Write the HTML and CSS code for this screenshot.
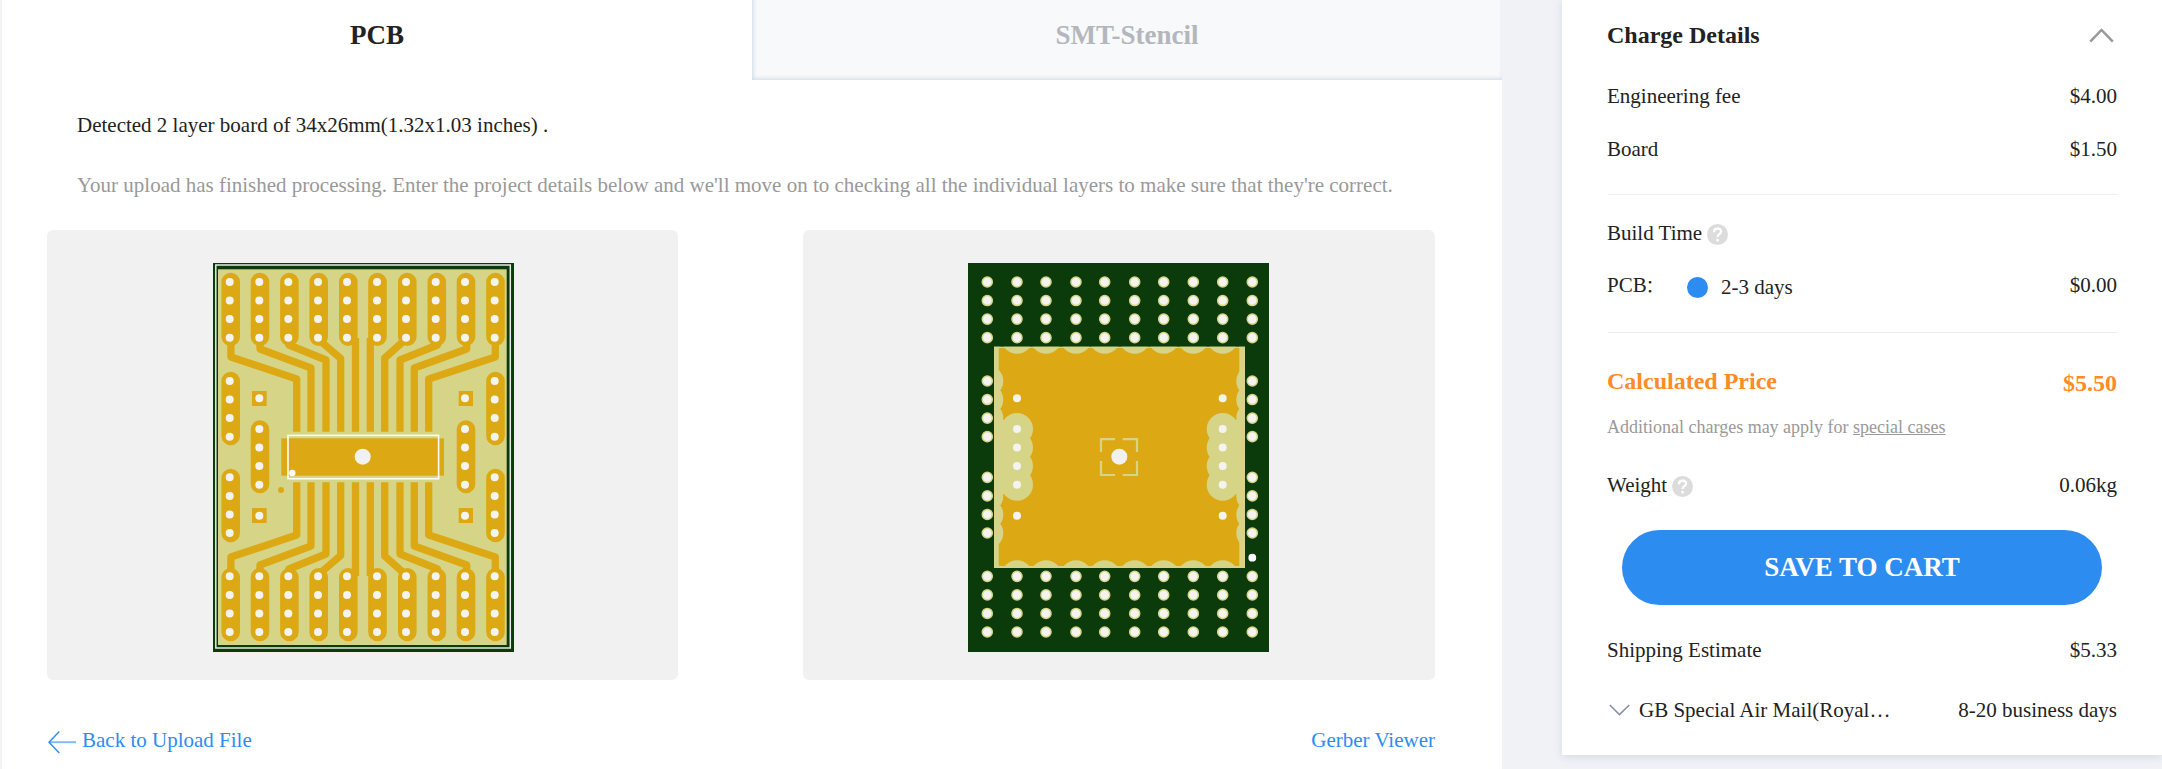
FILE: index.html
```html
<!DOCTYPE html>
<html lang="en">
<head>
<meta charset="utf-8">
<title>PCB Order</title>
<link rel="stylesheet" href="styles.css">
</head>
<body>
<div class="page">
  <main class="panel">
    <nav class="tabs">
      <div class="tab tab-active">PCB</div>
      <div class="tab tab-idle">SMT-Stencil</div>
    </nav>
    <p class="detected"><span>Detected 2 layer board of 34x26mm(1.32x1.03 inches) .</span></p>
    <p class="notice"><span>Your upload has finished processing. Enter the project details below and we'll move on to checking all the individual layers to make sure that they're correct.</span></p>
    <div class="boards">
      <div class="board-box board-front">
        <svg width="301" height="389" viewBox="0 0 301 389">
          <rect class="green" width="301" height="389"/>
          <rect class="edge" x="2.8" y="2" width="294.5" height="383"/>
          <rect class="pale" x="5" y="6.3" width="288.7" height="375.7"/>
          <defs>
            <g id="front-half">
              <g class="pad">
                <path d="M17.7 19V73.7M47 19V73.7M76.4 19V73.7M105.7 19V73.7M135.3 19V73.7M164.5 19V73.7M194.3 19V73.7M223.8 19V73.7M253 19V73.7M282.5 19V73.7M17.7 118V173M282.5 118V173"/>
              </g>
              <g class="trace">
                <path d="M17.9 75V94L83.7 116V168.7M47 75V86L98 105V168.7M75 80L76 82L113 97V168.7M105 76L127.7 95.5V168.7M142.5 75V168.7"/>
                <path d="M157.3 75V168.7M193 76L171.7 95V168.7M225.5 78L224.5 82L187 97V168.7M253.7 75V86L201.3 105V168.7M282.3 75V94L215.7 116V168.7"/>
              </g>
              <path class="gold" d="M39 128h14.7v15H39zM245.7 128h14.3v15h-14.3z"/>
              <path class="drill" d="M16.7 19V75M46.3 19V75M75.3 19V75M105 19V75M134 19V75M164 19V75M193 19V75M222.7 19V75M252 19V75M281.7 19V75M16.7 118V174M281.7 118V174M46.3 135.3h.1M252 135.3h.1"/>
            </g>
          </defs>
          <use href="#front-half"/>
          <use href="#front-half" transform="matrix(1 0 0 -1 0 388)"/>
          <path class="pad" d="M47 166.5V221M253 166.5V221"/>
          <path class="drill" d="M46.3 166V222M252 166V222"/>
          <rect class="gold" x="68.3" y="175.3" width="162.7" height="37.4"/>
          <rect class="silk" x="75" y="172.4" width="150.6" height="43.3"/>
          <circle class="hole" cx="149.7" cy="193.7" r="8"/>
          <circle class="white" cx="79.3" cy="210" r="3.2"/>
          <circle class="gold" cx="68" cy="227" r="3"/>
        </svg>
      </div>
      <div class="board-box board-back">
        <svg width="301" height="389" viewBox="0 0 301 389">
          <rect class="green" width="301" height="389"/>
          <rect class="pale" x="26" y="83.7" width="251" height="221.3"/>
          <rect class="gold" x="30.7" y="85" width="240.6" height="218"/>
          <defs>
            <clipPath id="pour"><rect x="26" y="83.7" width="251" height="221.3"/></clipPath>
            <g id="back-half">
              <path d="M19.3 19V75M49 19V75M78 19V75M108 19V75M136.7 19V75M166.7 19V75M195.7 19V75M225.3 19V75M254.7 19V75M284.3 19V75M19.3 118V174M284.3 118V174"/>
            </g>
          </defs>
          <g clip-path="url(#pour)">
            <g class="clearance">
              <use href="#back-half"/>
              <use href="#back-half" transform="matrix(1 0 0 -1 0 388)"/>
              <path d="M49 166V222M254.7 166V222"/>
            </g>
            <path class="pale" d="M28 157h9v74h-9zM266 157h9v74h-9zM34 166h15v56H34zM254.7 166h15v56h-15z"/>
          </g>
          <g class="ring">
            <use href="#back-half"/>
            <use href="#back-half" transform="matrix(1 0 0 -1 0 388)"/>
          </g>
          <g class="drill drill-back">
            <use href="#back-half"/>
            <use href="#back-half" transform="matrix(1 0 0 -1 0 388)"/>
          </g>
          <path class="drill" d="M49 166V222M254.7 166V222M49 135.3h.1M254.7 135.3h.1M49 252.7h.1M254.7 252.7h.1"/>
          <path class="bracket" d="M133 189V176.2H147M154.7 176.2H169V189M169 198V212H154.7M147 212H133V198"/>
          <circle class="hole" cx="151.3" cy="193.7" r="8"/>
          <circle class="white" cx="284.3" cy="294.7" r="3.9"/>
        </svg>
      </div>
    </div>
    <div class="links">
      <a class="link back"><svg width="28" height="24" viewBox="0 0 28 24"><path class="shaft" d="M1 12.2H28"/><path class="head" d="M11.3 1.4L1 12.2L11.3 23"/></svg><span>Back to Upload File</span></a>
      <a class="link gerber">Gerber Viewer</a>
    </div>
  </main>
  <aside class="card">
    <div class="row row-title"><h2>Charge Details</h2>
      <svg class="chev-up" width="25" height="15" viewBox="0 0 25 15"><path d="M1.2 13.7L12.5 2L23.8 13.7"/></svg></div>
    <div class="row"><span>Engineering fee</span><span>$4.00</span></div>
    <div class="row row-board"><span>Board</span><span>$1.50</span></div>
    <hr class="rule">
    <div class="row row-build"><span>Build Time</span>
      <svg class="help" width="21" height="21" viewBox="0 0 21 21"><circle cx="10.5" cy="10.5" r="10.5"/><path d="M6.9 8.2C6.9 3.3 14.1 3.5 14.1 7.6C14.1 10.1 10.5 10.1 10.5 13"/><rect x="9.2" y="14.7" width="2.7" height="2.7" rx="1"/></svg></div>
    <div class="row row-pcb"><span class="pcb-label">PCB<span class="colon">：</span></span><span class="option"><i class="radio"></i>2-3 days</span><span class="push">$0.00</span></div>
    <hr class="rule rule-second">
    <div class="row row-price"><span>Calculated Price</span><span class="total">$5.50</span></div>
    <div class="row row-note"><span>Additional charges may apply for <u>special cases</u></span></div>
    <div class="row row-weight"><span>Weight</span>
      <svg class="help" width="21" height="21" viewBox="0 0 21 21"><circle cx="10.5" cy="10.5" r="10.5"/><path d="M6.9 8.2C6.9 3.3 14.1 3.5 14.1 7.6C14.1 10.1 10.5 10.1 10.5 13"/><rect x="9.2" y="14.7" width="2.7" height="2.7" rx="1"/></svg><span class="push">0.06kg</span></div>
    <button class="save">SAVE TO CART</button>
    <div class="row"><span>Shipping Estimate</span><span>$5.33</span></div>
    <div class="row row-mail"><svg class="chev-down" width="21" height="12" viewBox="0 0 21 12"><path d="M.8 1L10.5 10.6L20.2 1"/></svg><span class="mail">GB Special Air Mail(Royal…</span><span class="push">8-20 business days</span></div>
  </aside>
</div>
</body>
</html>
```
FILE: styles.css
```css
* { box-sizing: border-box; }
body {
  margin: 0;
  background: #f0f2f6;
  color: #222;
  font: 21px/30px "Liberation Serif", "Noto Sans CJK SC", serif;
}
.page { display: flex; height: 769px; overflow: hidden; padding-left: 2px; }
p, h2 { margin: 0; }

.panel { width: 1500px; background: #fff; }
.tabs { display: flex; height: 80px; font-size: 27px; font-weight: bold; }
.tab { flex: 1; text-align: center; line-height: 71px; }
.tab-idle {
  margin-top: -10px; padding-top: 10px;
  color: #b3b7bd; background: #f8f9fb; box-shadow: inset 1px -1px 4px 0 #c9d8e4;
}
.detected { padding: 30px 0 0 75px; }
.notice { padding: 30px 0 0 75px; color: #999; white-space: nowrap; }
.boards { display: flex; justify-content: space-between; padding: 30px 67px 0 45px; }
.board-box {
  display: flex; align-items: center; justify-content: center;
  width: 632px; height: 450px; border-radius: 6px; background: #f1f1f1;
}
.board-front { width: 631px; padding-left: 2px; }
.board-back { padding-right: 1px; }
.board-box svg { margin-top: 5px; }
.green { fill: #0b3a0b; }
.pale { fill: #d6d486; }
.gold { fill: #dca914; }
.hole { fill: #f1f1f1; }
.white { fill: #fff; }
.edge { fill: none; stroke: #e8ebe6; stroke-width: 1.5; }
.silk { fill: none; stroke: #fffff4; stroke-width: 1.6; }
.pad { fill: none; stroke: #dca914; stroke-width: 18.6; stroke-linecap: round; }
.trace { fill: none; stroke: #dca914; stroke-width: 7.3; stroke-linejoin: round; }
.drill { fill: none; stroke: #f3f3f1; stroke-width: 8; stroke-linecap: round; stroke-dasharray: 0 18.55; }
.drill-back { stroke-width: 8.6; }
.ring { fill: none; stroke: #d6d486; stroke-width: 11.6; stroke-linecap: round; stroke-dasharray: 0 18.55; }
.clearance { fill: none; stroke: #d6d486; stroke-width: 32; stroke-linecap: round; stroke-dasharray: 0 18.55; }
.bracket { fill: none; stroke: #d6d486; stroke-width: 2.2; }

.links { display: flex; justify-content: space-between; padding: 45px 67px 0 46px; }
.link { display: flex; align-items: center; color: #2d8cf0; }
.back { gap: 6px; }
.back svg { margin-top: 3px; }
.back path { fill: none; stroke: #2d8cf0; stroke-width: 1.4; }
.back .shaft { stroke: #81baf6; stroke-width: 2; }

.card {
  width: 600px; height: 755px; margin-left: 60px; padding: 0 45px;
  background: #fff; box-shadow: 0 2px 8px rgba(150, 165, 190, .3);
}
.row { display: flex; align-items: center; justify-content: space-between; height: 52px; white-space: nowrap; }
.push { margin-left: auto; }
.row-title { height: 70px; }
.row-title h2 { font-size: 24px; }
.chev-up { margin-right: 3px; fill: none; stroke: #999; stroke-width: 2.5; }
.row-board { height: 54px; }
.rule { height: 1px; margin: 18px 0 12px 1px; border: 0; background: #eee; }
.row-build, .row-weight { justify-content: flex-start; }
.help { margin: 3px 0 0 5px; }
.help circle { fill: #dcdcdc; }
.help rect { fill: #fff; }
.help path { fill: none; stroke: #fff; stroke-width: 2.3; }
.row-pcb { justify-content: flex-start; }
.pcb-label { width: 80px; }
.colon { margin-left: -1px; font-size: 17px; line-height: 1; }
.option { display: flex; align-items: center; gap: 13px; margin-top: 4px; }
.radio { width: 21px; height: 21px; border-radius: 50%; background: #2d8cf0; }
.rule-second { margin: 21px 0 24px 1px; }
.row-price { height: 48px; color: #ff8a26; font-size: 24px; font-weight: bold; }
.total { margin-top: 4px; }
.row-note { height: 44px; color: #999; font-size: 18px; }
.row-weight { margin-top: 10px; }
.save {
  display: block; width: 480px; height: 75px; margin: 19px 0 19px 15px; padding: 0;
  border: 0; border-radius: 38px; background: #2d8cf0; color: #fff;
  font: bold 27px/75px "Liberation Serif", serif;
}
.row-mail { margin-top: 8px; }
.chev-down { margin: 0 9px 0 2px; fill: none; stroke: #858fa0; stroke-width: 1.5; }
```
